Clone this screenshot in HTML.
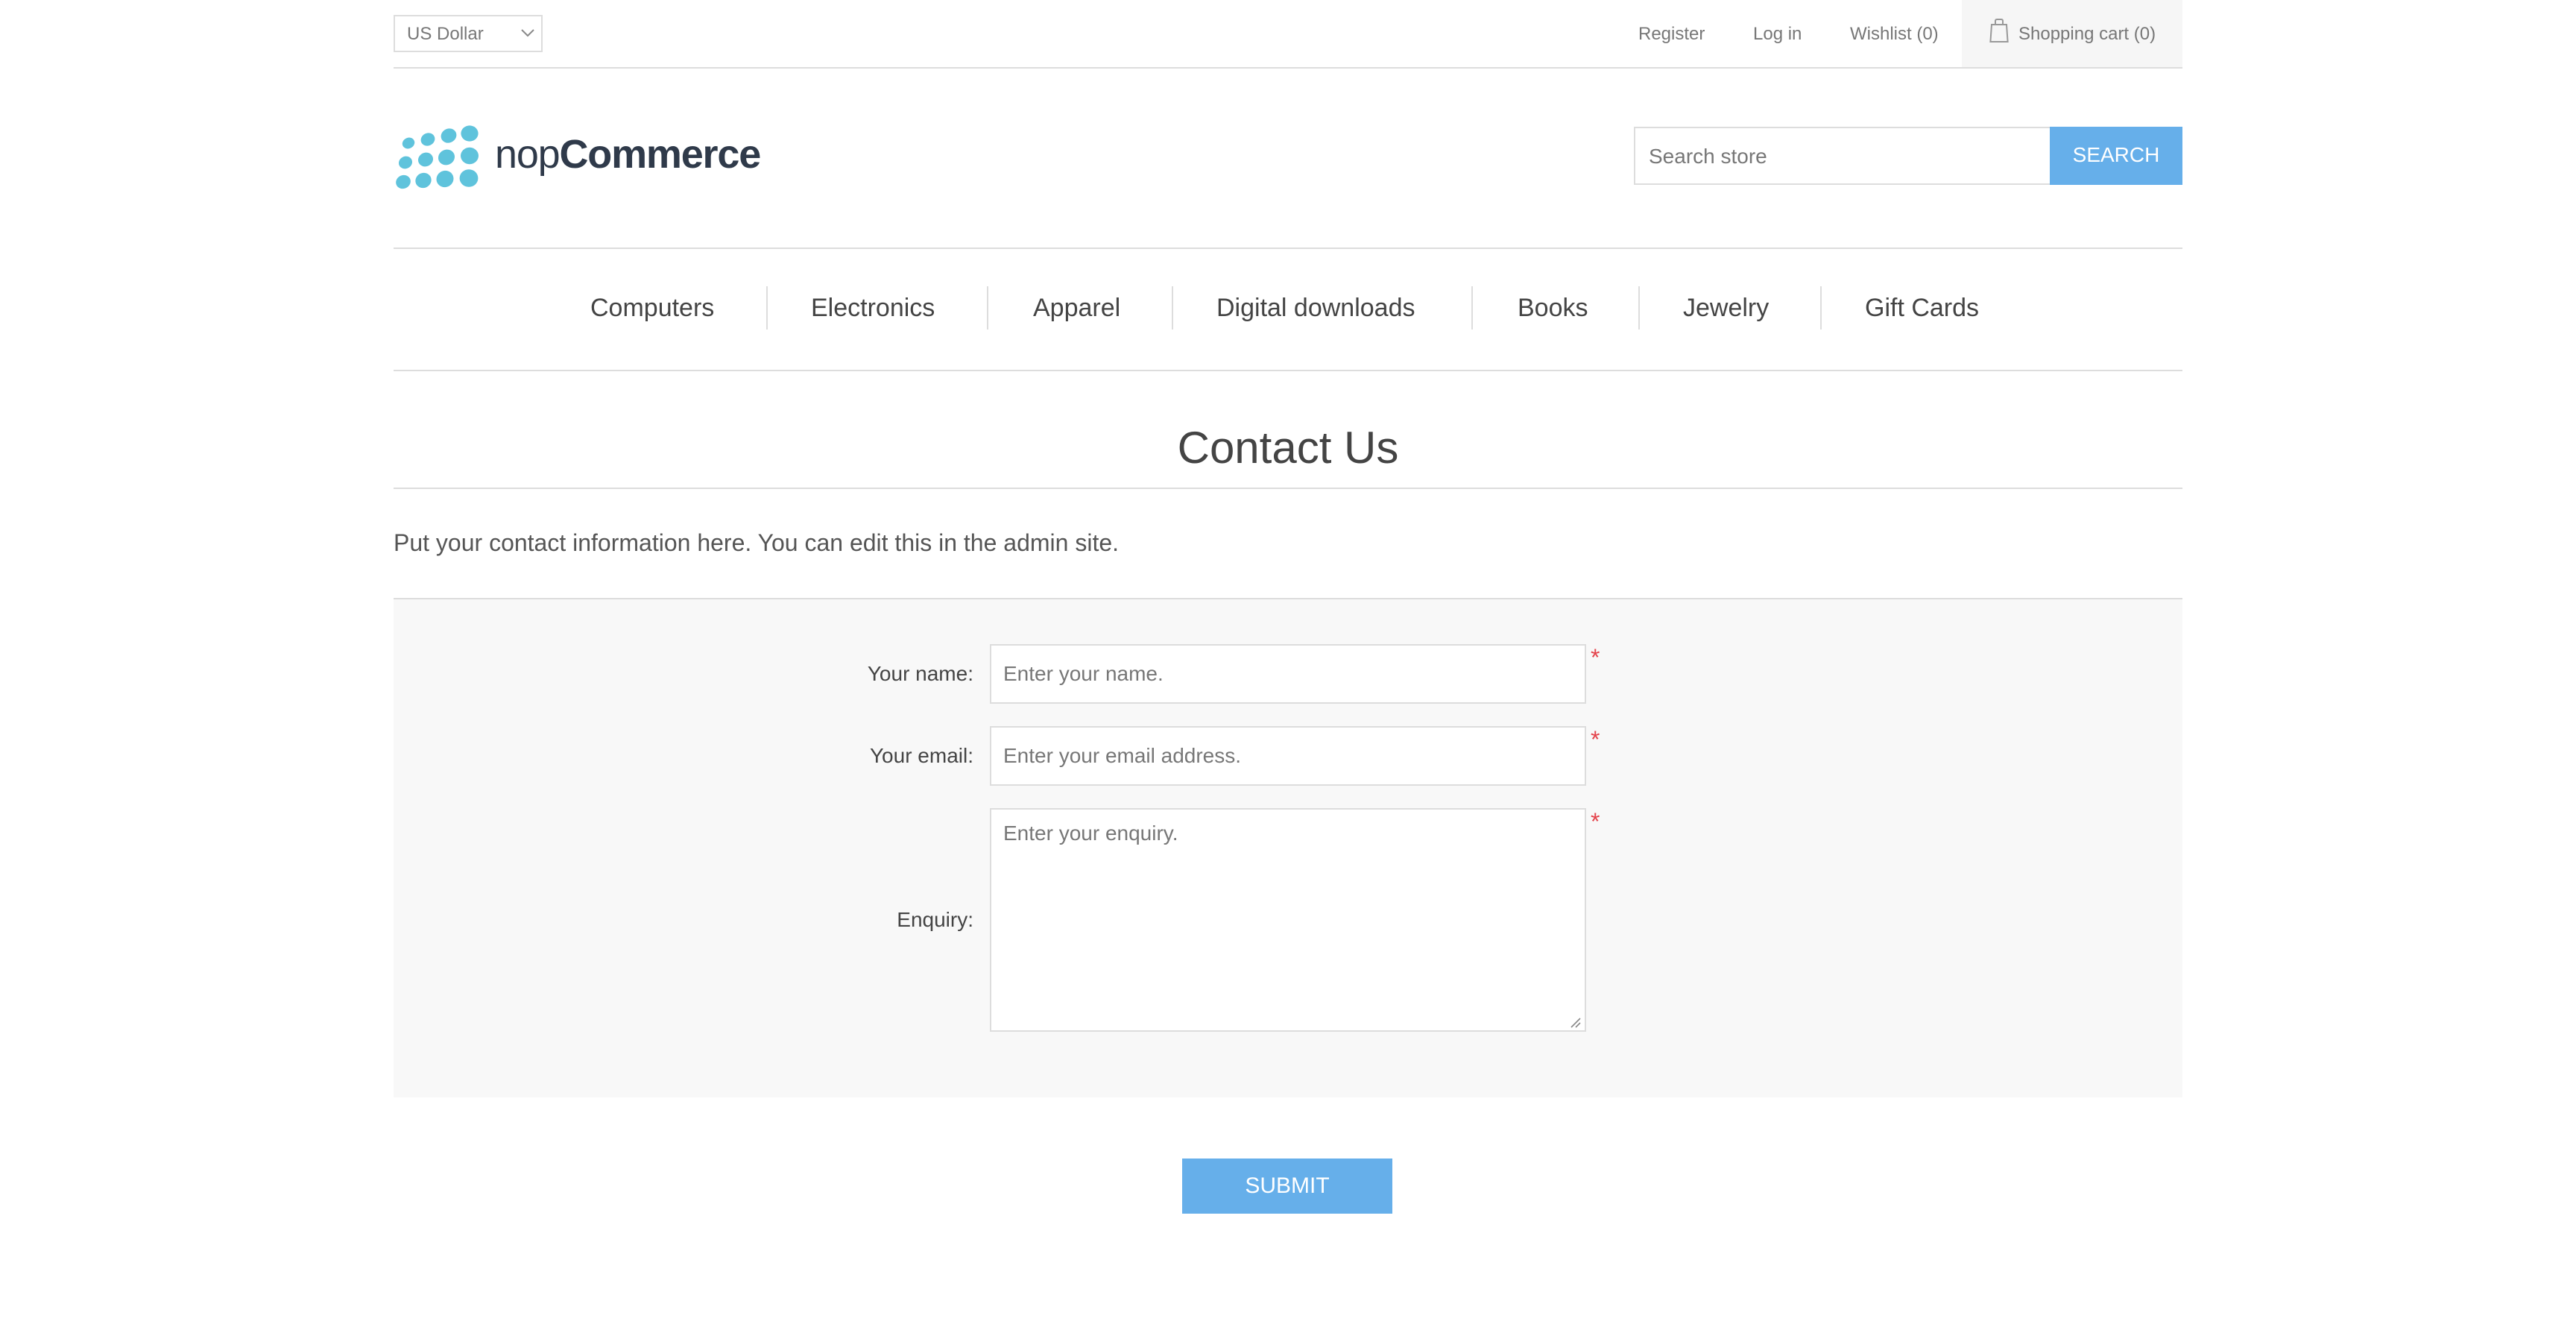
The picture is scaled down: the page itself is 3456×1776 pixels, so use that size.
<!DOCTYPE html>
<html><head><meta charset="utf-8"><style>
html{zoom:2}
*{box-sizing:border-box;margin:0;padding:0}
body{width:1728px;height:888px;overflow:hidden;background:#fff;font-family:"Liberation Sans",Arial,sans-serif;color:#444;position:relative}
.a{position:absolute}
.line{position:absolute;left:264px;width:1200px;height:1px;background:#ddd}
.toplink{position:absolute;top:16px;font-size:12px;color:#777}
.nav{position:absolute;top:197px;font-size:17px;color:#444}
.sep{position:absolute;top:192px;width:1px;height:29px;background:#ddd}
.lbl{position:absolute;right:1075px;font-size:14px;color:#444;text-align:right}
.inp{position:absolute;left:664px;width:400px;background:#fff;border:1px solid #ddd;font-size:14px;color:#777;padding-left:8px}
.star{position:absolute;left:1067px;color:#e4434b;font-size:16px}
</style></head><body>
<div class="a" style="left:264px;top:10px;width:100px;height:25px;border:1px solid #ddd;font-size:12px;color:#777;padding:5px 8px">US Dollar
<svg class="a" style="right:4px;top:8px" width="10" height="7" viewBox="0 0 10 7"><path d="M1 1l4 4 4-4" fill="none" stroke="#888" stroke-width="1"/></svg></div>
<div class="toplink" style="left:1099px">Register</div>
<div class="toplink" style="left:1176px">Log in</div>
<div class="toplink" style="left:1241px">Wishlist (0)</div>
<div class="a" style="left:1316px;top:0;width:148px;height:45px;background:#f6f6f6"></div>
<svg class="a" style="left:1334px;top:12px" width="14" height="17" viewBox="0 0 14 17"><path d="M4.5 4V2.2Q4.5 1 5.5 1h3Q9.5 1 9.5 2.2V4M2 4.5h10l.8 11.5H1.2z" fill="none" stroke="#999" stroke-width="1"/></svg>
<div class="toplink" style="left:1354px">Shopping cart (0)</div>
<div class="line" style="top:45px"></div>

<svg class="a" style="left:265px;top:84px" width="60" height="44" viewBox="0 0 60 44">
<g fill="#5fc3dc">
<ellipse cx="9" cy="12" rx="4.2" ry="3.6" transform="rotate(-25 9 12)"/><ellipse cx="22" cy="9.5" rx="4.8" ry="4.2" transform="rotate(-25 22 9.5)"/><ellipse cx="36" cy="7" rx="5.3" ry="4.7" transform="rotate(-25 36 7)"/><ellipse cx="50" cy="5.5" rx="5.8" ry="5.3"/>
<ellipse cx="7" cy="25" rx="4.6" ry="4.1" transform="rotate(-25 7 25)"/><ellipse cx="20.5" cy="23" rx="5.1" ry="4.6" transform="rotate(-25 20.5 23)"/><ellipse cx="34.5" cy="21.5" rx="5.6" ry="5.1" transform="rotate(-25 34.5 21.5)"/><ellipse cx="50" cy="20.5" rx="6" ry="5.6"/>
<ellipse cx="5.5" cy="38" rx="5" ry="4.5" transform="rotate(-25 5.5 38)"/><ellipse cx="19" cy="37" rx="5.4" ry="5" transform="rotate(-25 19 37)"/><ellipse cx="33.5" cy="36" rx="5.8" ry="5.5" transform="rotate(-25 33.5 36)"/><ellipse cx="49.5" cy="35.5" rx="6.2" ry="5.9"/>
</g></svg>
<div class="a" style="left:332px;top:88px;font-size:27px;color:#2f3a4a;letter-spacing:-0.6px;white-space:nowrap">nop<b>Commerce</b></div>

<div class="a" style="left:1096px;top:85px;width:280px;height:39px;border:1px solid #ddd;font-size:14px;color:#777;padding:11px 9px">Search store</div>
<div class="a" style="left:1375px;top:85px;width:89px;height:39px;background:#66afea;color:#fff;font-size:14px;text-align:center;padding-top:11px">SEARCH</div>
<div class="line" style="top:166px"></div>

<div class="nav" style="left:396px">Computers</div><div class="sep" style="left:514px"></div>
<div class="nav" style="left:544px">Electronics</div><div class="sep" style="left:662px"></div>
<div class="nav" style="left:693px">Apparel</div><div class="sep" style="left:786px"></div>
<div class="nav" style="left:816px">Digital downloads</div><div class="sep" style="left:987px"></div>
<div class="nav" style="left:1018px">Books</div><div class="sep" style="left:1099px"></div>
<div class="nav" style="left:1129px">Jewelry</div><div class="sep" style="left:1221px"></div>
<div class="nav" style="left:1251px">Gift Cards</div>
<div class="line" style="top:248px"></div>

<div class="a" style="left:264px;width:1200px;top:283px;text-align:center;font-size:30px;color:#444">Contact Us</div>
<div class="line" style="top:327px"></div>
<div class="a" style="left:264px;top:355px;font-size:16px;color:#555">Put your contact information here. You can edit this in the admin site.</div>
<div class="line" style="top:401px"></div>
<div class="a" style="left:264px;top:402px;width:1200px;height:334px;background:#f8f8f8"></div>

<div class="lbl" style="top:444px">Your name:</div>
<div class="inp" style="top:432px;height:40px;padding-top:11px">Enter your name.</div>
<div class="star" style="top:432px">*</div>
<div class="lbl" style="top:499px">Your email:</div>
<div class="inp" style="top:487px;height:40px;padding-top:11px">Enter your email address.</div>
<div class="star" style="top:487px">*</div>
<div class="lbl" style="top:609px">Enquiry:</div>
<div class="inp" style="top:542px;height:150px;padding-top:8px">Enter your enquiry.</div>
<div class="star" style="top:542px">*</div>
<svg class="a" style="left:1053px;top:682px" width="8" height="8" viewBox="0 0 8 8"><path d="M1 7L7 1M4 7L7 4" stroke="#888" stroke-width="0.8"/></svg>

<div class="a" style="left:793px;top:777px;width:141px;height:37px;background:#66afea;color:#fff;font-size:15px;text-align:center;padding-top:10px">SUBMIT</div>
</body></html>
